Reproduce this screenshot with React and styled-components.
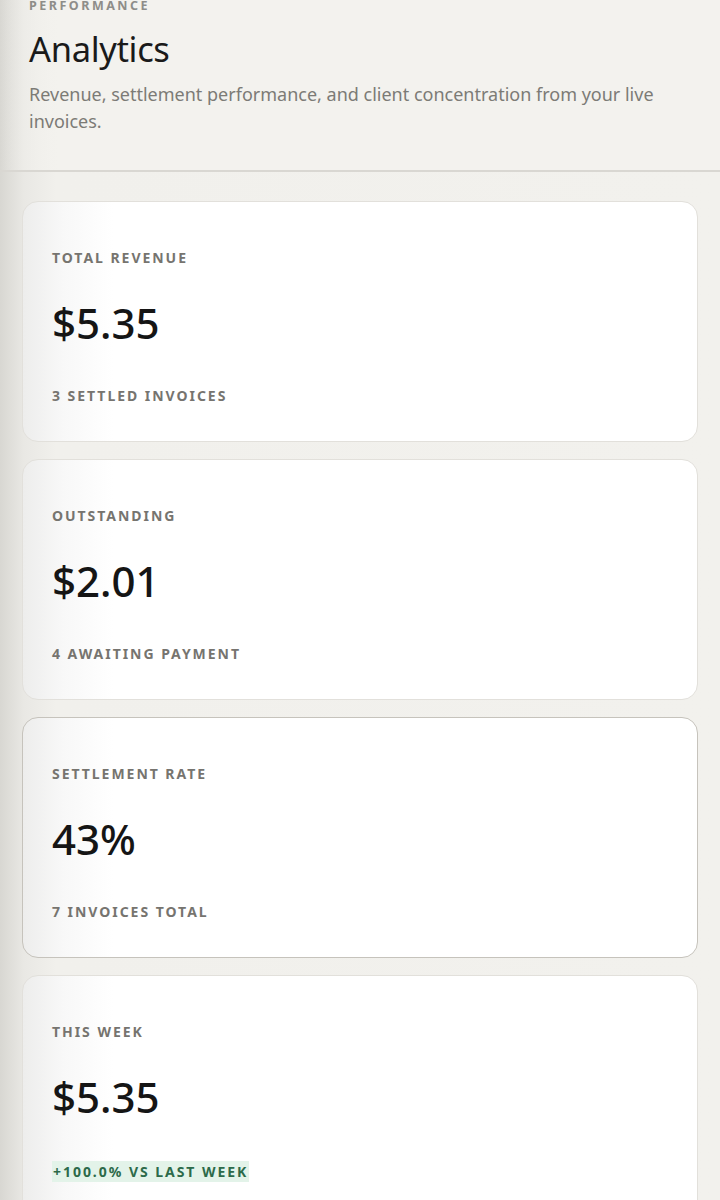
import styled, { createGlobalStyle } from "styled-components";

const GlobalStyle = createGlobalStyle`
  * {
    box-sizing: border-box;
  }

  body {
    margin: 0;
    font-family: "Noto Sans", "Open Sans", sans-serif;
    background: linear-gradient(90deg, #d8d7d2 0, #e9e8e4 24px, #f1f0ec 56px, #f2f1ed 100%);
    color: #161616;
  }
`;

const Page = styled.div`
  min-height: 1200px;
`;

const Header = styled.header`
  padding: 0 29px 35px;
  border-bottom: 2px solid #d9d7d2;
  background: linear-gradient(90deg, transparent 0, #f3f2ee 60px);
`;

const Eyebrow = styled.div`
  font-size: 12.5px;
  line-height: 12px;
  font-weight: 700;
  letter-spacing: 0.2em;
  color: #8e8d89;
  text-transform: uppercase;
`;

const Title = styled.h1`
  margin: 15px 0 0;
  font-size: 34.5px;
  line-height: 44px;
  font-weight: 400;
  letter-spacing: -0.01em;
  color: #1a1a1a;
`;

const Subtitle = styled.p`
  margin: 10px 0 0;
  font-size: 18px;
  line-height: 27px;
  color: #7c7b76;
`;

const CardList = styled.main`
  display: flex;
  flex-direction: column;
  gap: 17px;
  padding: 29px 22px 40px;
`;

const Card = styled.section`
  display: flex;
  flex-direction: column;
  align-items: flex-start;
  padding: 47px 29px 36px;
  border-radius: 16px;
  border: 1px solid ${(p) => (p.$active ? "#c6c3bc" : "#e2e0db")};
  background: linear-gradient(90deg, #ededec 0, #f8f8f8 40px, #ffffff 90px);
`;

const Label = styled.div`
  font-size: 14px;
  line-height: 18px;
  font-weight: 700;
  letter-spacing: 0.14em;
  text-transform: uppercase;
  color: #76746f;
`;

const Value = styled.div`
  margin-top: 31px;
  font-size: 42px;
  line-height: 50px;
  font-weight: 500;
  color: #151515;
`;

const Meta = styled.div`
  margin-top: 39px;
  font-size: 14px;
  line-height: 18px;
  font-weight: 700;
  letter-spacing: 0.14em;
  text-transform: uppercase;
  color: ${(p) => (p.$positive ? "#2c6a49" : "#76746f")};
  background: ${(p) => (p.$positive ? "#e3f3e9" : "transparent")};
  padding: ${(p) => (p.$positive ? "2px 1px 1px" : "0")};
  margin-bottom: ${(p) => (p.$positive ? "-3px" : "0")};
`;

const stats = [
  { label: "Total revenue", value: "$5.35", meta: "3 settled invoices" },
  { label: "Outstanding", value: "$2.01", meta: "4 awaiting payment" },
  { label: "Settlement rate", value: "43%", meta: "7 invoices total", active: true },
  { label: "This week", value: "$5.35", meta: "+100.0% vs last week", positive: true },
];

const App = () => {
  return (
    <Page>
      <GlobalStyle />
      <Header>
        <Eyebrow>Performance</Eyebrow>
        <Title>Analytics</Title>
        <Subtitle>
          Revenue, settlement performance, and client concentration from your live invoices.
        </Subtitle>
      </Header>
      <CardList>
        {stats.map((s) => (
          <Card key={s.label} $active={s.active}>
            <Label>{s.label}</Label>
            <Value>{s.value}</Value>
            <Meta $positive={s.positive}>{s.meta}</Meta>
          </Card>
        ))}
      </CardList>
    </Page>
  );
};

export default App;
